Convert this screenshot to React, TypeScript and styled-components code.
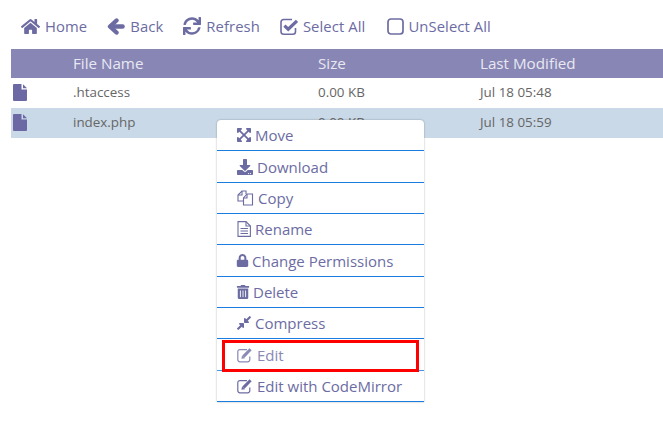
import { ReactNode } from 'react';
import styled, { createGlobalStyle } from 'styled-components';
import {
	FaCompressAlt,
	FaDownload,
	FaExpandArrowsAlt,
	FaHome,
	FaLock,
	FaSync,
	FaTrashAlt,
} from 'react-icons/fa';

const BackIcon = () => (
	<svg width={18} height={19} viewBox="0 0 18 19" fill="none" stroke="currentColor" strokeLinecap="round" strokeLinejoin="round">
		<path strokeWidth={4.4} d="M9.5 3.5 L3 9.5 L9.5 15.5" />
		<path strokeWidth={4.4} d="M4 9.5 H15.6" />
	</svg>
);

const SquareIcon = () => (
	<svg width={17} height={19} viewBox="0 0 17 19" fill="none" stroke="currentColor" strokeWidth={1.7}>
		<rect x={1} y={2} width={15} height={15} rx={3} />
	</svg>
);

const CheckSquareIcon = () => (
	<svg width={19} height={19} viewBox="0 0 19 19" fill="none" stroke="currentColor">
		<path strokeWidth={1.6} d="M15.5 11 V14.5 Q15.5 17.2 12.8 17.2 H3.7 Q1 17.2 1 14.5 V5.2 Q1 2.5 3.7 2.5 H12" />
		<path strokeWidth={3.2} d="M4.4 8.6 L8.2 12.2 L17 3.8" />
	</svg>
);

const FileIconShape = () => (
	<svg width={15} height={17} viewBox="0 0 15 17" fill="currentColor">
		<path d="M1 0 H8.5 V5.5 H14 V16 Q14 17 13 17 H1 Q0 17 0 16 V1 Q0 0 1 0 Z" />
		<path d="M10 0.3 L14 4.2 H10 Z" />
	</svg>
);

const CopyIcon = () => (
	<svg width={17} height={16} viewBox="0 0 17 16" fill="none" stroke="currentColor" strokeWidth={1.1}>
		<path d="M6 11 H1 V5 L5 1 H9 V4" />
		<path d="M5 1 V5 H1" />
		<path d="M6.5 15 V8 L10 4 H15.5 V15 Z" />
		<path d="M10 4 V8 H6.5" />
	</svg>
);

const RenameIcon = () => (
	<svg width={14} height={16} viewBox="0 0 14 16" fill="none" stroke="currentColor" strokeWidth={1.1}>
		<path d="M1 0.6 H9 L13.4 5 V15.4 H1 Z" />
		<path d="M9 0.6 V5 H13.4" />
		<path d="M3.5 7.5 H11 M3.5 10 H11 M3.5 12.5 H11" />
	</svg>
);

const EditIcon = () => (
	<svg width={16} height={16} viewBox="0 0 16 16" fill="none" stroke="currentColor">
		<path strokeWidth={1.2} d="M10 2.6 H3 Q0.8 2.6 0.8 4.8 V12.6 Q0.8 14.8 3 14.8 H10.6 Q12.8 14.8 12.8 12.6 V9.5" />
		<path strokeWidth={3} d="M6.4 9.6 L13.6 2.2" />
		<path fill="currentColor" stroke="none" d="M4.4 11.8 L5 8.4 L8 11.2 Z" />
	</svg>
);

const tools: { label: string; icon: ReactNode; slot: number; gap?: number; lead?: number }[] = [
	{ label: 'Home', icon: <FaHome size={19} />, slot: 19 },
	{ label: 'Back', icon: <BackIcon />, slot: 18 },
	{ label: 'Refresh', icon: <FaSync size={18} />, slot: 18 },
	{ label: 'Select All', icon: <CheckSquareIcon />, slot: 19, gap: 4 },
	{ label: 'UnSelect All', icon: <SquareIcon />, slot: 17, gap: 4, lead: 2 },
];

const files = [
	{ name: '.htaccess', size: '0.00 KB', date: 'Jul 18 05:48' },
	{ name: 'index.php', size: '0.00 KB', date: 'Jul 18 05:59' },
];

const menu: { label: string; icon: ReactNode; slot: number; muted?: boolean }[] = [
	{ label: 'Move', icon: <FaExpandArrowsAlt size={16} />, slot: 14 },
	{ label: 'Download', icon: <FaDownload size={16} />, slot: 16 },
	{ label: 'Copy', icon: <CopyIcon />, slot: 17 },
	{ label: 'Rename', icon: <RenameIcon />, slot: 14 },
	{ label: 'Change Permissions', icon: <FaLock size={13} />, slot: 11 },
	{ label: 'Delete', icon: <FaTrashAlt size={14} />, slot: 12 },
	{ label: 'Compress', icon: <FaCompressAlt size={16} />, slot: 14 },
	{ label: 'Edit', icon: <EditIcon />, slot: 16, muted: true },
	{ label: 'Edit with CodeMirror', icon: <EditIcon />, slot: 16 },
];

const App = () => {
	return (
		<Page>
			<GlobalStyle />
			<Toolbar>
				{tools.map(tool => (
					<Tool key={tool.label} gap={tool.gap} lead={tool.lead}>
						<IconSlot width={tool.slot}>{tool.icon}</IconSlot>
						{tool.label}
					</Tool>
				))}
			</Toolbar>
			<Table>
				<HeadRow>
					<span />
					<span>File Name</span>
					<span>Size</span>
					<span>Last Modified</span>
				</HeadRow>
				{files.map((file, index) => (
					<FileRow key={file.name} selected={index === 1}>
						<FileIcon>
							<FileIconShape />
						</FileIcon>
						<span>{file.name}</span>
						<span>{file.size}</span>
						<span>{file.date}</span>
					</FileRow>
				))}
			</Table>
			<ContextMenu>
				{menu.map(item => (
					<MenuItem key={item.label} muted={item.muted}>
						<IconSlot width={item.slot}>{item.icon}</IconSlot>
						{item.label}
					</MenuItem>
				))}
			</ContextMenu>
			<Highlight />
		</Page>
	);
};

const GlobalStyle = createGlobalStyle`
	body {
		margin: 0;
		background: #fff;
		font-family: 'Open Sans', 'Noto Sans', sans-serif;
	}
`;

const Page = styled.div`
	position: relative;
	width: 663px;
	height: 437px;
	overflow: hidden;
`;

const Toolbar = styled.div`
	height: 49px;
	display: flex;
	align-items: center;
	gap: 20px;
	padding: 3px 0 0 21px;
	box-sizing: border-box;
`;

const Tool = styled.div<{ gap?: number; lead?: number }>`
	display: flex;
	align-items: center;
	gap: ${({ gap }) => gap ?? 5}px;
	margin-left: ${({ lead }) => lead ?? 0}px;
	font-size: 14.8px;
	letter-spacing: 0.1px;
	color: #6c6ca3;
`;

const IconSlot = styled.span<{ width: number }>`
	width: ${({ width }) => width}px;
	display: flex;
	justify-content: center;
	flex-shrink: 0;

	svg {
		flex-shrink: 0;
	}
`;

const Table = styled.div`
	margin-left: 11px;
`;

const HeadRow = styled.div`
	height: 29px;
	padding-bottom: 1px;
	box-sizing: border-box;
	display: grid;
	grid-template-columns: 62px 245px 162px 1fr;
	align-items: center;
	background: #8886b4;
	color: #e8e8f2;
	font-size: 15.2px;
`;

const FileRow = styled.div<{ selected?: boolean }>`
	height: 30px;
	padding-bottom: 2px;
	box-sizing: border-box;
	display: grid;
	grid-template-columns: 62px 245px 162px 1fr;
	align-items: center;
	background: ${({ selected }) => (selected ? '#c9d9e7' : '#fff')};
	color: #666;
	font-size: 13.4px;
`;

const FileIcon = styled.span`
	display: flex;
	padding-left: 2px;
	color: #6c68a4;
`;

const ContextMenu = styled.div`
	position: absolute;
	left: 217px;
	top: 120px;
	width: 207px;
	background: #fff;
	border-radius: 4px 4px 0 0;
	box-shadow: 0 0 2px rgba(0, 0, 0, 0.35);
`;

const MenuItem = styled.div<{ muted?: boolean }>`
	height: 31.35px;
	box-sizing: border-box;
	display: flex;
	align-items: center;
	gap: 4px;
	padding: 0.5px 0 0 20px;
	border-bottom: 1px solid #1a7be0;
	font-size: 15px;
	color: #6c6ca3;
	opacity: ${({ muted }) => (muted ? 0.8 : 1)};
`;

const Highlight = styled.div`
	position: absolute;
	left: 222px;
	top: 340px;
	width: 197px;
	height: 32px;
	box-sizing: border-box;
	border: 3px solid #f00;
`;

export default App;
